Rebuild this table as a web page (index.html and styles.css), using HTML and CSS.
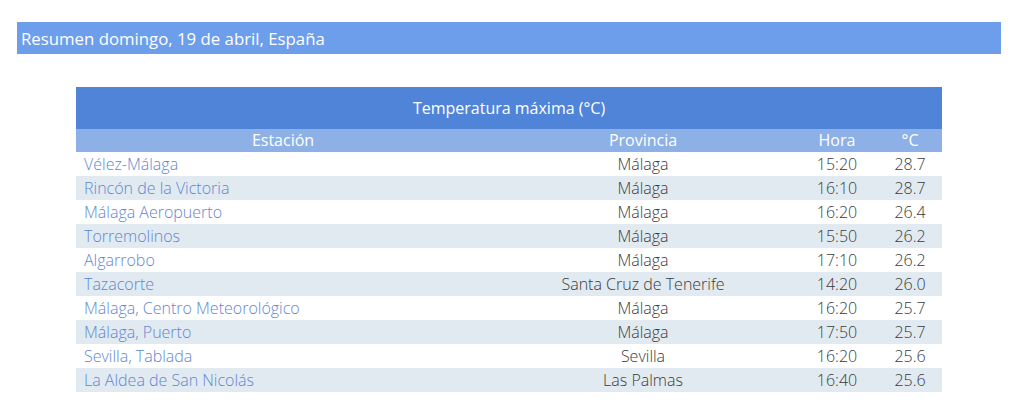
FILE: index.html
```html
<!DOCTYPE html>
<html lang="es">
<head>
<meta charset="utf-8">
<title>Resumen</title>
<link rel="stylesheet" href="styles.css">
</head>
<body>
<div class="page">
  <div class="summary-bar">Resumen domingo, 19 de abril, España</div>
  <table class="temps">
    <colgroup>
      <col class="c-est"><col class="c-prov"><col class="c-hora"><col class="c-temp">
    </colgroup>
    <thead>
      <tr class="title-row"><th colspan="4">Temperatura máxima (°C)</th></tr>
      <tr class="head-row"><th>Estación</th><th>Provincia</th><th>Hora</th><th>°C</th></tr>
    </thead>
    <tbody>
      <tr><td class="est"><a href="#">Vélez-Málaga</a></td><td>Málaga</td><td>15:20</td><td>28.7</td></tr>
      <tr><td class="est"><a href="#">Rincón de la Victoria</a></td><td>Málaga</td><td>16:10</td><td>28.7</td></tr>
      <tr><td class="est"><a href="#">Málaga Aeropuerto</a></td><td>Málaga</td><td>16:20</td><td>26.4</td></tr>
      <tr><td class="est"><a href="#">Torremolinos</a></td><td>Málaga</td><td>15:50</td><td>26.2</td></tr>
      <tr><td class="est"><a href="#">Algarrobo</a></td><td>Málaga</td><td>17:10</td><td>26.2</td></tr>
      <tr><td class="est"><a href="#">Tazacorte</a></td><td>Santa Cruz de Tenerife</td><td>14:20</td><td>26.0</td></tr>
      <tr><td class="est"><a href="#">Málaga, Centro Meteorológico</a></td><td>Málaga</td><td>16:20</td><td>25.7</td></tr>
      <tr><td class="est"><a href="#">Málaga, Puerto</a></td><td>Málaga</td><td>17:50</td><td>25.7</td></tr>
      <tr><td class="est"><a href="#">Sevilla, Tablada</a></td><td>Sevilla</td><td>16:20</td><td>25.6</td></tr>
      <tr><td class="est"><a href="#">La Aldea de San Nicolás</a></td><td>Las Palmas</td><td>16:40</td><td>25.6</td></tr>
    </tbody>
  </table>
</div>
</body>
</html>
```
FILE: styles.css
```css
html, body {
  margin: 0;
  padding: 0;
  background: #ffffff;
}
body {
  font-family: "Open Sans", "Liberation Sans", sans-serif;
  color: #3a3a3a;
}
.page {
  padding: 22px 14px 0 17px;
}
.summary-bar {
  background: #6d9eeb;
  color: #ffffff;
  font-size: 16.8px;
  height: 32px;
  line-height: 33px;
  padding-left: 4px;
  width: 980px;
}
.temps {
  margin: 33px 0 0 59px;
  width: 866px;
  border-collapse: collapse;
  table-layout: fixed;
  font-size: 16px;
  font-weight: 300;
}
.c-est { width: 414px; }
.c-prov { width: 306px; }
.c-hora { width: 82px; }
.c-temp { width: 64px; }
.temps th, .temps td {
  padding: 0;
  text-align: center;
  font-weight: 300;
  white-space: nowrap;
}
.title-row th {
  background: #4f84d8;
  color: #ffffff;
  height: 42px;
  font-size: 16px;
  font-weight: 400;
}
.head-row th {
  background: #8db1e7;
  color: #ffffff;
  height: 23px;
  font-size: 16px;
  font-weight: 400;
  line-height: 23px;
}
.temps tbody td {
  height: 23px;
  line-height: 23px;
  padding-top: 1px;
}
.temps tbody tr:nth-child(even) td {
  background: #e2eaf1;
}
.temps td.est {
  text-align: left;
  padding-left: 8px;
}
.temps td.est a {
  color: #5f87cf;
  text-decoration: none;
}
```
